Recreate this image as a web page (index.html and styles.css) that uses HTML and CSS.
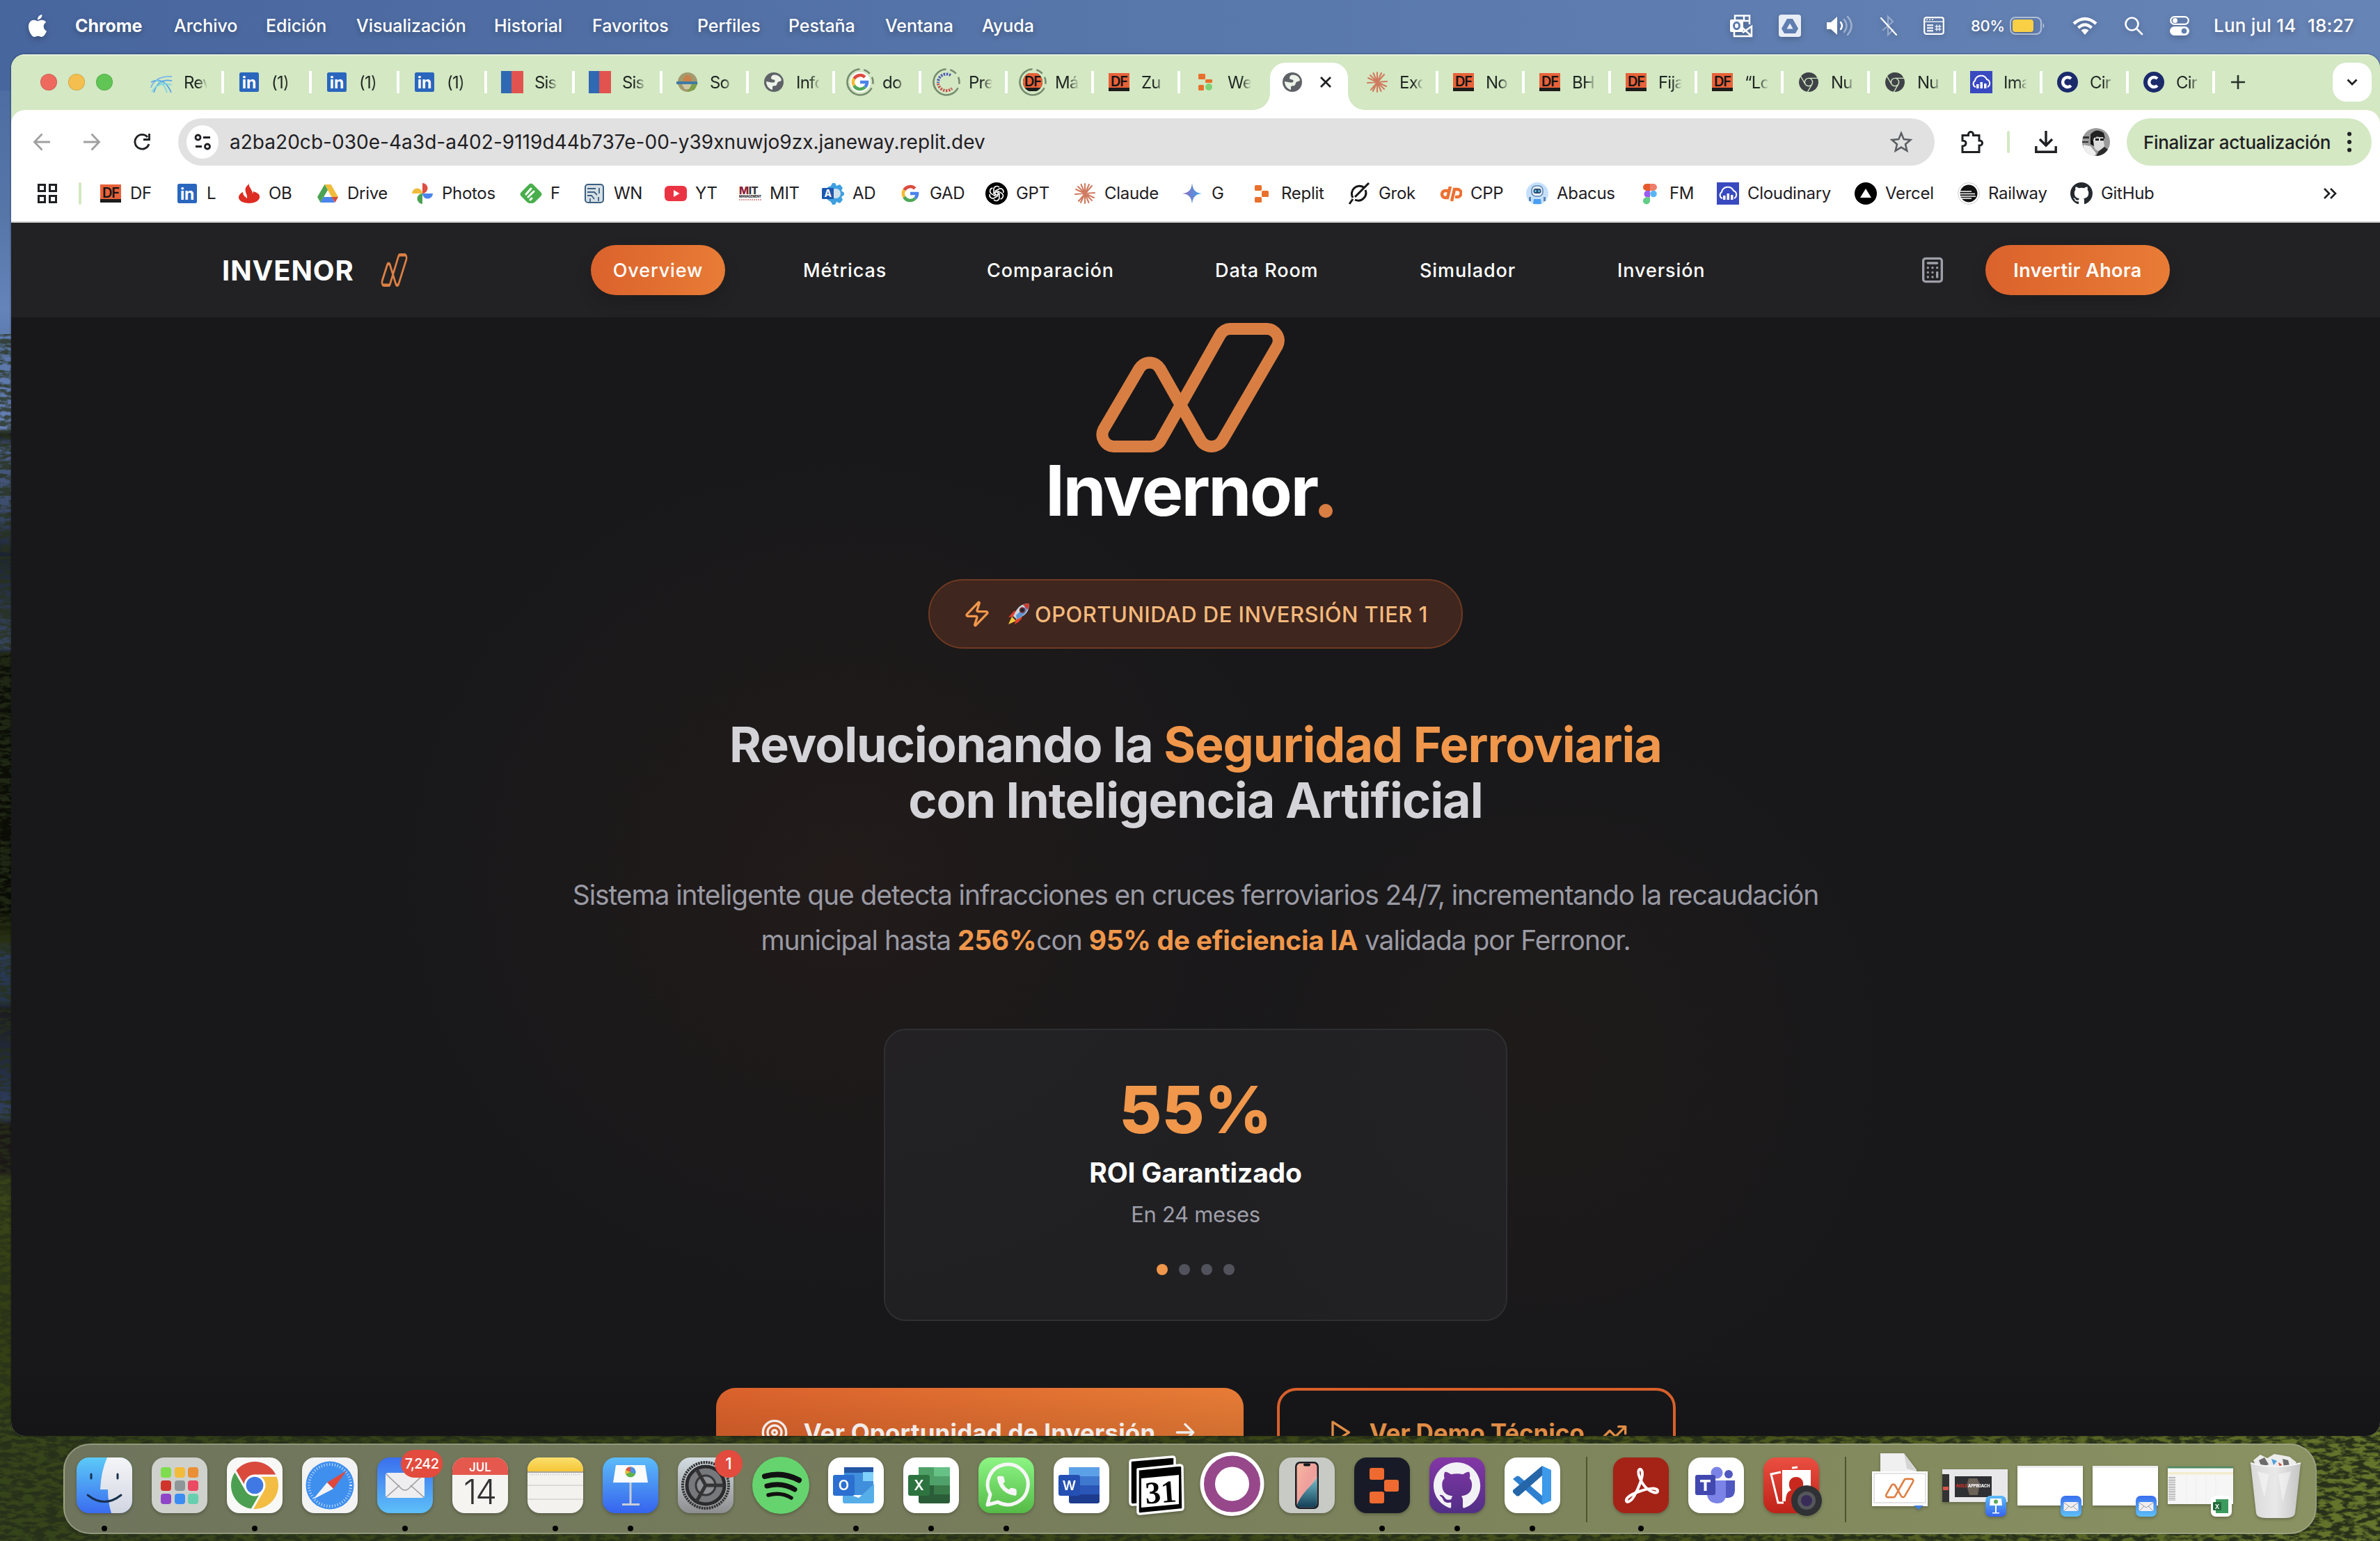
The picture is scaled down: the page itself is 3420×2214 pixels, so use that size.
FILE: index.html
```html
<!DOCTYPE html>
<html lang="es">
<head>
<meta charset="utf-8">
<title>Invernor</title>
<link rel="stylesheet" href="styles.css">
</head>
<body>
<svg class="defs" width="0" height="0">
  <defs>
    <linearGradient id="g-finder" x1="0" y1="0" x2="0" y2="1"><stop offset="0" stop-color="#5ccaf8"/><stop offset="1" stop-color="#3a6cf0"/></linearGradient>
    <linearGradient id="g-silver" x1="0" y1="0" x2="0" y2="1"><stop offset="0" stop-color="#f4f5f8"/><stop offset="1" stop-color="#d2d6e2"/></linearGradient>
    <linearGradient id="g-gray" x1="0" y1="0" x2="0" y2="1"><stop offset="0" stop-color="#d3dde2"/><stop offset="1" stop-color="#8e8e90"/></linearGradient>
    <linearGradient id="g-mail" x1="0" y1="0" x2="0" y2="1"><stop offset="0" stop-color="#3a6fee"/><stop offset="1" stop-color="#5ec0f9"/></linearGradient>
    <linearGradient id="g-key" x1="0" y1="0" x2="0" y2="1"><stop offset="0" stop-color="#5cbcf8"/><stop offset="1" stop-color="#3663ee"/></linearGradient>
    <linearGradient id="g-wa" x1="0" y1="0" x2="0" y2="1"><stop offset="0" stop-color="#8cf584"/><stop offset="1" stop-color="#55bb47"/></linearGradient>
    <linearGradient id="g-yel" x1="0" y1="0" x2="0" y2="1"><stop offset="0" stop-color="#fadf6c"/><stop offset="1" stop-color="#f6c637"/></linearGradient>
    <linearGradient id="g-gh" x1="0" y1="0" x2="0" y2="1"><stop offset="0" stop-color="#8436a6"/><stop offset="1" stop-color="#512f86"/></linearGradient>
    <linearGradient id="g-red" x1="0" y1="0" x2="0" y2="1"><stop offset="0" stop-color="#ea4f41"/><stop offset="1" stop-color="#bf2218"/></linearGradient>
    <linearGradient id="g-phone" x1="0" y1="0" x2="1" y2="1"><stop offset="0" stop-color="#f7b8a0"/><stop offset=".5" stop-color="#ef9f9c"/><stop offset="1" stop-color="#e8b9ae"/></linearGradient>
    <linearGradient id="g-sea" x1="0" y1="0" x2="0" y2="1"><stop offset="0" stop-color="#79c3d0"/><stop offset="1" stop-color="#123f57"/></linearGradient>
    <linearGradient id="g-star" x1="0" y1="0" x2="1" y2="0"><stop offset="0" stop-color="#9168c0"/><stop offset="1" stop-color="#3ba6e8"/></linearGradient>
    <linearGradient id="g-trash" x1="0" y1="0" x2="1" y2="0"><stop offset="0" stop-color="#d9d9d9"/><stop offset=".5" stop-color="#e9e9e9"/><stop offset="1" stop-color="#c4c4c4"/></linearGradient>
    <linearGradient id="g-sky" x1="0" y1="0" x2="1" y2="0"><stop offset="0" stop-color="#48669e"/><stop offset=".5" stop-color="#5877ab"/><stop offset="1" stop-color="#6784b6"/></linearGradient>
    <linearGradient id="g-side" x1="0" y1="0" x2="0" y2="2214" gradientUnits="userSpaceOnUse">
      <stop offset="0" stop-color="#48669e"/><stop offset=".14" stop-color="#5676a8"/><stop offset=".2" stop-color="#6484ba"/><stop offset=".23" stop-color="#5a76a8"/><stop offset=".278" stop-color="#667fb4"/><stop offset=".282" stop-color="#15171d"/><stop offset=".29" stop-color="#4a5d86"/><stop offset=".33" stop-color="#3c4c6c"/><stop offset=".36" stop-color="#1b2330"/><stop offset=".42" stop-color="#3a4866"/><stop offset=".425" stop-color="#0d0f08"/><stop offset=".59" stop-color="#090b04"/><stop offset=".61" stop-color="#28300f"/><stop offset=".62" stop-color="#2b3b58"/><stop offset=".65" stop-color="#26344e"/><stop offset=".655" stop-color="#1b1c1f"/><stop offset=".7" stop-color="#26314a"/><stop offset=".725" stop-color="#33436a"/><stop offset=".73" stop-color="#1b1717"/><stop offset=".76" stop-color="#1b1717"/><stop offset=".765" stop-color="#3a4519"/><stop offset=".86" stop-color="#333f14"/><stop offset="1" stop-color="#3a4818"/>
    </linearGradient>
    <linearGradient id="g-grass" x1="0" y1="0" x2="1" y2="0"><stop offset="0" stop-color="#36441a"/><stop offset=".5" stop-color="#3a4517"/><stop offset=".75" stop-color="#4b561d"/><stop offset="1" stop-color="#66752c"/></linearGradient>
    <filter id="f-grass" x="0" y="0" width="100%" height="100%"><feTurbulence type="fractalNoise" baseFrequency="0.06 0.16" numOctaves="5" seed="8"/><feColorMatrix values="0 0 0 0 0.02  0 0 0 0 0.03  0 0 0 0 0.01  4.5 0 0 0 -1.75"/></filter>
    <path id="mark" d="M29.500 181.400H83A17 17 0 0 0 97.900 172.700L183.400 21.100A17 17 0 0 1 198.300 12.400H251A17 17 0 0 1 265.500 36.800L186.800 172.200A18.300 18.300 0 0 1 155 172.200L97 69.600A17.500 17.500 0 0 0 67 69.600L15.700 157A17 17 0 0 0 29.500 181.400Z"/>
    <path id="octo" d="M8 0C3.58 0 0 3.58 0 8c0 3.54 2.29 6.53 5.47 7.59.4.07.55-.17.55-.38 0-.19-.01-.82-.01-1.49-2.01.37-2.53-.49-2.69-.94-.09-.23-.48-.94-.82-1.13-.28-.15-.68-.52-.01-.53.63-.01 1.08.58 1.23.82.72 1.21 1.87.87 2.33.66.07-.52.28-.87.51-1.07-1.78-.2-3.64-.89-3.64-3.95 0-.87.31-1.59.82-2.15-.08-.2-.36-1.02.08-2.12 0 0 .67-.21 2.2.82.64-.18 1.32-.27 2-.27s1.36.09 2 .27c1.53-1.04 2.2-.82 2.2-.82.44 1.1.16 1.92.08 2.12.51.56.82 1.27.82 2.15 0 3.07-1.87 3.75-3.65 3.95.29.25.54.73.54 1.48 0 1.07-.01 1.93-.01 2.2 0 .21.15.46.55.38A8.01 8.01 0 0 0 16 8c0-4.42-3.58-8-8-8z"/>
    <g id="chrome-wheel">
      <path class="c-red" d="M12 0C8.21 0 4.831 1.757 2.632 4.501l3.953 6.848A5.454 5.454 0 0 1 12 6.545h10.691A12 12 0 0 0 12 0z"/>
      <path class="c-green" d="M1.931 5.47A11.943 11.943 0 0 0 0 12c0 6.012 4.42 10.991 10.189 11.864l3.953-6.847a5.45 5.45 0 0 1-6.865-2.29z"/>
      <path class="c-yellow" d="M15.273 7.636a5.446 5.446 0 0 1 1.45 7.09l.002.001h-.002l-5.344 9.257c.206.01.413.016.621.016 6.627 0 12-5.373 12-12 0-1.54-.29-3.011-.818-4.364z"/>
      <circle class="c-blue" cx="12" cy="12" r="4.364"/>
    </g>
  </defs>
  <symbol id="i-li" viewBox="0 0 32 32"><rect x="2" y="2" width="28" height="28" rx="2.5" fill="#2a66bd"/><text x="16" y="25" text-anchor="middle" font-size="23" font-weight="700" fill="#fff">in</text></symbol>
  <symbol id="i-df" viewBox="0 0 32 32"><rect x="1" y="3" width="30" height="26" fill="#1c1c1c"/><rect x="1" y="3" width="30" height="21" fill="#e8623a"/><text x="16" y="21.5" text-anchor="middle" font-size="20" font-weight="600" letter-spacing="-1" fill="#141414">DF</text></symbol>
  <symbol id="i-arc" viewBox="0 0 32 32"><g fill="none" stroke-width="1.8"><path stroke="#7db7e8" d="M1 24C4 14 14 7 31 8"/><path stroke="#5aa7e6" d="M5 31C10 14 20 12 31 14M1 16C14 10 24 16 30 31"/><path stroke="#7fd6e0" d="M2 30C8 20 18 16 31 20M8 13c10 4 14 10 16 18"/></g></symbol>
  <symbol id="i-flag" viewBox="0 0 32 32"><path fill="#2f69b3" d="M0 0h15v32H0z"/><path fill="#e25350" d="M15 0h17v32H15z"/></symbol>
  <symbol id="i-seal" viewBox="0 0 32 32"><circle cx="16" cy="16" r="14" fill="#a39a6e"/><path fill="#7fa04a" d="M18 20l13-3-5 10-10 3z"/><circle cx="16" cy="12" r="6" fill="#c9824a"/><path fill="#3f7ba1" d="M0 15h30v4H0z"/><path fill="#cfc8a8" d="M8 19h14l-4 7h-6z"/></symbol>
  <symbol id="i-globe" viewBox="0 0 32 32"><circle cx="16" cy="16" r="14" fill="#5f6368"/><path fill="#eef3ea" d="M17 5.500c-3 0-5 2-5 4.500 0 2 2 2 4 2.500 2 0 2 3.500 0 4-3 .5-7-1-11-1.500 0 6 4 11 9 12v-4c0-2 3-1.500 5-2 2-1 1-4 3.500-5.500 2-1 4-.5 4.500-2.500-1-4-4-7-10-7.500z"/></symbol>
  <symbol id="i-google" viewBox="0 0 32 32"><g fill="none" stroke-width="4.600"><path stroke="#dc4b3e" d="M22.800 8.800A10 10 0 0 0 7.300 11"/><path stroke="#f3bb33" d="M7.300 11a10 10 0 0 0 0 10"/><path stroke="#4fa757" d="M7.300 21a10 10 0 0 0 15.800 2"/><path stroke="#4a83ec" d="M23.100 23A10 10 0 0 0 26 16h-10"/></g></symbol>
  <symbol id="i-googlering" viewBox="-4 -4 40 40"><circle cx="16" cy="16" r="14.500" fill="#fff"/><use href="#i-google" width="32" height="32"/><circle cx="16" cy="16" r="18.500" fill="none" stroke="#768c6f" stroke-width="2.600" stroke-dasharray="54 6 10 6 10 6"  transform="rotate(100 16 16)"/></symbol>
  <symbol id="i-cring" viewBox="-4 -4 40 40"><path fill="none" stroke="#4a55b8" stroke-width="4" stroke-dasharray="2.400 1.600" d="M22 6A12 12 0 0 0 4 17"/><path fill="none" stroke="#c6504e" stroke-width="4" stroke-dasharray="2.400 1.600" d="M4 18A12 12 0 0 0 24 25"/><circle cx="16" cy="16" r="18.500" fill="none" stroke="#768c6f" stroke-width="2.600" stroke-dasharray="54 6 10 6 10 6" transform="rotate(100 16 16)"/></symbol>
  <symbol id="i-dfring" viewBox="-4 -4 40 40"><clipPath id="cp-df"><circle cx="16" cy="16" r="14"/></clipPath><g clip-path="url(#cp-df)"><use href="#i-df" width="32" height="32"/></g><circle cx="16" cy="16" r="18.500" fill="none" stroke="#768c6f" stroke-width="2.600" stroke-dasharray="54 6 10 6 10 6" transform="rotate(100 16 16)"/></symbol>
  <symbol id="i-replit" viewBox="0 0 32 32"><g fill="#e9702c"><rect x="6" y="4" width="10" height="8" rx="1.500"/><rect x="16" y="12" width="10" height="9" rx="1.500"/><rect x="6" y="21" width="10" height="8" rx="1.500"/></g></symbol>
  <symbol id="i-replitdot" viewBox="0 0 32 32"><g fill="#e9702c"><rect x="6" y="4" width="10" height="8" rx="1.500"/><rect x="16" y="12" width="10" height="5" rx="1.500"/><rect x="6" y="20" width="8" height="8" rx="1.500"/></g><circle cx="21" cy="23" r="5" fill="#7fd277"/></symbol>
  <symbol id="i-claude" viewBox="0 0 32 32"><g stroke="#d07b5f" stroke-width="2.100" stroke-linecap="round"><path d="M16 2v28M2 17l28-2M6 6l20 20M26 5L7 27M10.500 3l11 26M22 3L10 29M3 10l26 12"/></g></symbol>
  <symbol id="i-chromegray" viewBox="0 0 32 32"><g transform="translate(2 2) scale(1.1667)" fill="#3f4347"><path d="M12 0C8.21 0 4.831 1.757 2.632 4.501l3.953 6.848A5.454 5.454 0 0 1 12 6.545h10.691A12 12 0 0 0 12 0z"/><path d="M1.931 5.47A11.943 11.943 0 0 0 0 12c0 6.012 4.42 10.991 10.189 11.864l3.953-6.847a5.45 5.45 0 0 1-6.865-2.29z"/><path d="M15.273 7.636a5.446 5.446 0 0 1 1.45 7.09l-5.344 9.257c.206.01.413.016.621.016 6.627 0 12-5.373 12-12 0-1.54-.29-3.011-.818-4.364z"/><circle cx="12" cy="12" r="4.200"/></g></symbol>
  <symbol id="i-cloudinary" viewBox="0 0 32 32"><path fill="#3949c0" d="M0 0h32v32H0z"/><path fill="none" stroke="#fff" stroke-width="2" d="M8 23a5 5 0 0 1-1-9 9 9 0 0 1 17-2 6 6 0 0 1 1 11"/><g fill="#fff"><rect x="9" y="19" width="3.500" height="6"/><rect x="14.500" y="16" width="3.500" height="9"/><rect x="20" y="18" width="3.500" height="7"/></g></symbol>
  <symbol id="i-cblue" viewBox="0 0 32 32"><circle cx="16" cy="16" r="15" fill="#1b2a6b"/><path fill="none" stroke="#fff" stroke-width="4.500" d="M21 11a7 7 0 1 0 0 10"/></symbol>
  <symbol id="i-flame" viewBox="0 0 32 32"><path fill="#dd2c22" d="M16 1c-2 5 5 9 5 16l1-4c6 2 10 4 9 9-1 5-8 8-15 8S1 27 1 22c0-4 3-7 6-8 0 5 4 7 6 9 1-6-4-9-2-15 1-3 4-4 5-7z"/></symbol>
  <symbol id="i-drive" viewBox="0 0 32 32"><path fill="#f1bc3b" d="M11.500 3h9L31 21h-9.500z"/><path fill="#4ba253" d="M11.500 3L16 11 5.500 29 1 21z"/><path fill="#4a84ed" d="M10 21h12l4 8H5.500z"/><path fill="#d84a3c" d="M21.500 21H31l-4.500 8z"/></symbol>
  <symbol id="i-photos" viewBox="0 0 32 32"><path fill="#dc4f42" d="M16 1a7.500 7.500 0 0 1 0 15z"/><path fill="#4a84ed" d="M31 16a7.500 7.500 0 0 1-15 0z"/><path fill="#4ba253" d="M16 31a7.500 7.500 0 0 1 0-15z"/><path fill="#f1bc3b" d="M1 16a7.500 7.500 0 0 1 15 0z"/></symbol>
  <symbol id="i-feedly" viewBox="0 0 32 32"><path fill="#48ae4b" d="M13 3q3-3 6 0l11 11q3 3 0 6l-8 8q-2 2-4 2h-4q-2 0-4-2l-8-8q-3-3 0-6z"/><path stroke="#fff" stroke-width="3" stroke-linecap="round" d="M9 17l7-8M12 21l8-8M15 25l2-2"/></symbol>
  <symbol id="i-wn" viewBox="0 0 32 32"><rect x="3" y="3" width="26" height="26" rx="4" fill="#d6e0e6" stroke="#3d5f80" stroke-width="2"/><g fill="none" stroke="#3d5f80" stroke-width="1.800"><path d="M6 9h12M6 14h10l4 4M6 19h6l4 5M23 8v8M10 28v-5M22 21v6"/></g></symbol>
  <symbol id="i-yt" viewBox="0 0 32 32"><rect x="0" y="5" width="32" height="22" rx="6" fill="#eb3443"/><path fill="#fff" d="M13 11v10l8.500-5z"/></symbol>
  <symbol id="i-mit" viewBox="0 0 32 32"><text x="0" y="17" font-size="15" font-weight="800" letter-spacing="-.5" fill="#8d2236">M<tspan fill="#333">IT</tspan></text><text x="0" y="22" font-size="4.600" font-weight="800" fill="#333">MANAGEMENT</text><path stroke="#cc7a7a" stroke-width="1.500" stroke-dasharray="2 1" d="M0 25h32"/></symbol>
  <symbol id="i-ad" viewBox="0 0 32 32"><path fill="#3f9fe0" d="M15 1h4l2 4 5-2 4 5-2 4 4 3v3l-4 3 2 4-4 5-5-2-2 4h-4l-2-4-5-3V7l5-2z"/><circle cx="20" cy="16" r="7" fill="#cfe0ec"/><rect x="0" y="8" width="17" height="16" rx="1.500" fill="#1d57b0"/><text x="8.500" y="21" text-anchor="middle" font-size="14" font-weight="700" fill="#fff">A</text></symbol>
  <symbol id="i-gpt" viewBox="0 0 32 32"><circle cx="16" cy="16" r="16" fill="#000"/><g fill="none" stroke="#fff" stroke-width="1.600"><g id="petal"><path d="M16 13.500l-4 2.300v-6a4.500 4.500 0 0 1 8-2.600"/></g><use href="#petal" transform="rotate(60 16 16)"/><use href="#petal" transform="rotate(120 16 16)"/><use href="#petal" transform="rotate(180 16 16)"/><use href="#petal" transform="rotate(240 16 16)"/><use href="#petal" transform="rotate(300 16 16)"/></g></symbol>
  <symbol id="i-gemini" viewBox="0 0 32 32"><path fill="url(#g-star)" d="M16 1c1 10 5 14 14 15-9 1-13 5-14 15-1-10-5-14-14-15 9-1 13-5 14-15z"/></symbol>
  <symbol id="i-grok" viewBox="0 0 32 32"><path fill="none" stroke="#161616" stroke-width="3" d="M23 7.500A11 11 0 0 0 7 22M10 25A11 11 0 0 0 25 11M30 1L10 21M7 24L2 31"/></symbol>
  <symbol id="i-cp" viewBox="0 0 32 32"><g fill="none" stroke="#ec7133" stroke-width="4.500"><path d="M14 12H8a5 5 0 0 0 0 10h3L15 6M17 27l4-17h4a5.500 5.500 0 0 1 0 11h-3"/></g></symbol>
  <symbol id="i-abacus" viewBox="0 0 32 32"><circle cx="16" cy="16" r="16" fill="#c5e0fb"/><rect x="8" y="5" width="16" height="15" rx="6" fill="#e7f1fb" stroke="#5b84b5" stroke-width="1.500"/><rect x="10.500" y="9" width="11" height="7" rx="3" fill="#2b4a72"/><path fill="#6fd9e8" d="M12.500 11h2v3h-2zM17.500 11h2v3h-2z"/><path fill="#4a9ff0" d="M11 24h10l1 7H10z"/><path fill="#5b84b5" d="M4 21h3v6H4zM25 21h3v6h-3z"/></symbol>
  <symbol id="i-figma" viewBox="0 0 32 32"><path fill="#e55b2d" d="M16 2h-5a5 5 0 0 0 0 10h5z"/><path fill="#ee7d6c" d="M16 2h5a5 5 0 0 1 0 10h-5z"/><path fill="#9b5cf3" d="M16 12h-5a5 5 0 0 0 0 9.500h5z"/><circle cx="21" cy="16.500" r="4.800" fill="#58b6f5"/><path fill="#61cd86" d="M16 21.500h-5a5 5 0 1 0 5 5z"/></symbol>
  <symbol id="i-vercel" viewBox="0 0 32 32"><circle cx="16" cy="16" r="16" fill="#000"/><path fill="#fff" d="M16 9l8 13H8z"/></symbol>
  <symbol id="i-railway" viewBox="0 0 32 32"><circle cx="16" cy="16" r="15.500" fill="#fff" stroke="#ccc"/><circle cx="16" cy="16" r="12.500" fill="#111"/><path stroke="#fff" stroke-width="1.600" d="M3 13h17M3 16.500h22M4 20h22M5 23h15"/></symbol>
  <symbol id="i-github" viewBox="0 0 32 32"><use href="#octo" fill="#24292f" transform="scale(2)"/></symbol>
</svg>

<svg class="wallpaper" viewBox="0 0 3420 2214" preserveAspectRatio="none">
  <rect width="3420" height="2214" fill="url(#g-side)"/>
  <rect width="3420" height="130" fill="url(#g-sky)"/>
  <rect y="2030" width="3420" height="184" fill="url(#g-grass)"/>
  <rect y="480" width="40" height="1550" filter="url(#f-grass)" opacity=".75"/>
  <rect y="2030" width="3420" height="184" filter="url(#f-grass)"/>
</svg>

<header class="menubar">
  <nav class="menus">
    <svg class="apple" viewBox="0 0 24 24"><path d="M12.152 6.896c-.948 0-2.415-1.078-3.96-1.04-2.04.027-3.910 1.183-4.961 3.014-2.117 3.675-.546 9.103 1.519 12.090 1.013 1.454 2.208 3.090 3.792 3.039 1.520-.065 2.090-.987 3.935-.987 1.831 0 2.350.987 3.960.948 1.637-.026 2.676-1.480 3.676-2.948 1.156-1.688 1.636-3.325 1.662-3.415-.039-.013-3.182-1.221-3.220-4.857-.026-3.040 2.480-4.494 2.597-4.559-1.429-2.090-3.623-2.324-4.390-2.376-2-.156-3.675 1.090-4.610 1.090zM15.530 3.830c.843-1.012 1.400-2.427 1.245-3.830-1.207.052-2.662.805-3.532 1.818-.780.896-1.454 2.338-1.273 3.714 1.338.104 2.715-.688 3.559-1.701"/></svg>
    <span class="app">Chrome</span><span>Archivo</span><span>Edición</span><span>Visualización</span><span>Historial</span><span>Favoritos</span><span>Perfiles</span><span>Pestaña</span><span>Ventana</span><span>Ayuda</span>
  </nav>
  <div class="status">
    <svg width="32" height="32" viewBox="0 0 32 32"><path fill="none" stroke="#fff" stroke-width="2.500" d="M7 8V1.500h21V14M18 9h10M20 2v6M6 25v6h25V17l-13 9M18 19l13 12"/><rect y="7" width="19" height="18" rx="2" fill="#fff"/><ellipse cx="9.500" cy="16" rx="4" ry="4.800" fill="none" stroke="#5b79ae" stroke-width="3"/></svg>
    <svg width="32" height="32" viewBox="0 0 32 32"><rect width="32" height="32" rx="4" fill="#e8edf5"/><path fill="#5f7db0" d="M12 6h8l8 14-4 7H8l-4-7z"/><path fill="#e8edf5" d="M16 12.500l4.500 8h-9z"/></svg>
    <svg width="40" height="32" viewBox="0 0 40 32"><path fill="#fff" d="M1 11h6l9-8v26l-9-8H1z"/><g fill="none" stroke="#fff" stroke-width="2.500" stroke-linecap="round"><path d="M21 11q4 5 0 10"/><path opacity=".4" d="M26 7q7 9 0 18M31 3q11 13 0 26"/></g></svg>
    <svg width="24" height="32" viewBox="0 0 24 32" fill="none" stroke="#fff" stroke-width="2.200" stroke-linecap="round"><path opacity=".35" d="M4 22L18 10 11 3v26l7-7"/><path d="M1 5l22 24"/></svg>
    <svg width="30" height="26" viewBox="0 0 30 26"><rect x="1.200" y="1.200" width="27.600" height="23.600" rx="3" fill="none" stroke="#fff" stroke-width="2.200"/><path fill="#e8edf5" d="M2 8h26V6.500H2zM5 11h9v2.500H5zM5 15h9v2.500H5zM5 19h9v2.500H5z"/><path fill="#fff" d="M4 3.500h2v1.500H4zM8 3.500h2v1.500H8zM12 3.500h2v1.500h-2z"/><path fill="none" stroke="#e8edf5" stroke-width="1.500" d="M19 11.500v9M23 11.500v9M16.500 14h9M16.500 18h9"/></svg>
    <span class="pct">80%</span>
    <svg width="52" height="26" viewBox="0 0 52 26"><rect x="1" y="1" width="44" height="24" rx="7" fill="none" stroke="#fff" stroke-opacity=".5" stroke-width="2"/><rect x="4" y="4" width="30" height="18" rx="4" fill="#f8cf45"/><path fill="#fff" fill-opacity=".5" d="M47.500 9q4 4 0 8z"/></svg>
    <svg width="36" height="26" viewBox="0 0 36 26" fill="none" stroke="#fff" stroke-width="4.500"><path d="M2 10Q18-4 34 10M8.500 16q9.500-9 19 0"/><path fill="#fff" stroke="none" d="M12.500 19.500q5.500-4 11 0L18 26z"/></svg>
    <svg width="28" height="28" viewBox="0 0 28 28" fill="none" stroke="#fff" stroke-width="2.700" stroke-linecap="round"><circle cx="11.500" cy="11.500" r="9"/><path d="M18.500 18.500L26 26"/></svg>
    <svg width="28" height="28" viewBox="0 0 28 28"><rect x="1.200" y="1.200" width="25.600" height="10.600" rx="5.300" fill="none" stroke="#fff" stroke-width="2.200"/><circle cx="7.500" cy="6.500" r="3.500" fill="#fff"/><rect y="15" width="28" height="13" rx="6.500" fill="#fff"/><circle cx="20.500" cy="21.500" r="3.800" fill="#5f7db0"/></svg>
    <span class="date">Lun jul 14</span><span class="date">18:27</span>
  </div>
</header>

<main class="window">
  <div class="tabstrip">
    <div class="lights"><i class="l-red"></i><i class="l-yellow"></i><i class="l-green"></i></div>
    <div class="tab first"><svg><use href="#i-arc"/></svg><span>Rev</span></div>
    <div class="tab w"><svg><use href="#i-li"/></svg><span>(1)</span></div>
    <div class="tab w"><svg><use href="#i-li"/></svg><span>(1)</span></div>
    <div class="tab w"><svg><use href="#i-li"/></svg><span>(1)</span></div>
    <div class="tab w"><svg><use href="#i-flag"/></svg><span>Sis</span></div>
    <div class="tab w"><svg><use href="#i-flag"/></svg><span>Sis</span></div>
    <div class="tab"><svg><use href="#i-seal"/></svg><span>So</span></div>
    <div class="tab"><svg><use href="#i-globe"/></svg><span>Info</span></div>
    <div class="tab ring"><svg><use href="#i-googlering"/></svg><span>do</span></div>
    <div class="tab ring"><svg><use href="#i-cring"/></svg><span>Pre</span></div>
    <div class="tab ring"><svg><use href="#i-dfring"/></svg><span>Má</span></div>
    <div class="tab"><svg><use href="#i-df"/></svg><span>Zu</span></div>
    <div class="tab last-before"><svg><use href="#i-replitdot"/></svg><span>We</span></div>
    <div class="tab active"><svg><use href="#i-globe"/></svg><svg class="close" viewBox="0 0 16 16"><path d="M1 1l14 14M15 1L1 15"/></svg></div>
    <div class="tab"><svg><use href="#i-claude"/></svg><span>Exc</span></div>
    <div class="tab"><svg><use href="#i-df"/></svg><span>No</span></div>
    <div class="tab"><svg><use href="#i-df"/></svg><span>BH</span></div>
    <div class="tab"><svg><use href="#i-df"/></svg><span>Fija</span></div>
    <div class="tab"><svg><use href="#i-df"/></svg><span>“Lo</span></div>
    <div class="tab"><svg><use href="#i-chromegray"/></svg><span>Nu</span></div>
    <div class="tab"><svg><use href="#i-chromegray"/></svg><span>Nu</span></div>
    <div class="tab"><svg><use href="#i-cloudinary"/></svg><span>Ima</span></div>
    <div class="tab"><svg><use href="#i-cblue"/></svg><span>Cir</span></div>
    <div class="tab"><svg><use href="#i-cblue"/></svg><span>Cir</span></div>
    <svg class="plus" viewBox="0 0 22 22"><path d="M11 1v20M1 11h20"/></svg>
    <div class="chevron"><svg viewBox="0 0 16 10"><path d="M1.500 1.500L8 8l6.500-6.500"/></svg></div>
  </div>

  <div class="toolbar">
    <svg class="nav dim" viewBox="0 0 24 24"><path d="M24 12H2M12.500 .5L1.500 12l11 11.500"/></svg>
    <svg class="nav dim" viewBox="0 0 24 24"><path d="M0 12h22M11.500 .5L22.500 12l-11 11.500"/></svg>
    <svg class="nav" viewBox="0 0 24 24"><path d="M22 15a10.300 10.300 0 1 1-2-10M22.500 0v8.500H14"/></svg>
    <div class="omnibox">
      <span class="site"><svg viewBox="0 0 24 24"><circle cx="5.500" cy="5.500" r="3.500"/><path d="M13 5.500h10M2 18.500h9"/><circle cx="19" cy="18.500" r="3.500"/></svg></span>
      <span class="url">a2ba20cb-030e-4a3d-a402-9119d44b737e-00-y39xnuwjo9zx.janeway.replit.dev</span>
      <svg class="fav" viewBox="0 0 24 24"><path d="M12 2.500l2.800 6.600 7.200.6-5.500 4.700 1.700 7-6.200-3.700-6.200 3.700 1.700-7L2 9.700l7.200-.6z"/></svg>
    </div>
    <svg class="ext" viewBox="0 0 34 34"><path d="M3 7.500h8.500V6a3.500 3.500 0 0 1 7 0v1.500H27V15h1a3.500 3.500 0 0 1 0 7h-1v9.500H3v-8.500q5-.5 5-4.200T3 15z"/></svg>
    <i class="bar"></i>
    <svg class="dl" viewBox="0 0 32 32"><path d="M16 0v20M7 12l9 9 9-9M1.800 22v8.200h28.400V22"/></svg>
    <svg class="avatar" viewBox="0 0 40 40"><clipPath id="cp-av"><circle cx="20" cy="20" r="20"/></clipPath><g clip-path="url(#cp-av)"><path fill="#9a9a9a" d="M0 0h40v40H0z"/><path fill="#333" d="M0 12h10v3H0zM0 19h9v2H0z"/><path fill="#222" d="M12 9Q20-1 31 7l2 8-12-3-5 5-4-1z"/><path fill="#dcdcdc" d="M17 14l13-1 2 13-6 8-7-3-4-8z"/><path fill="#111" d="M19 15h5v3h-5zM26 15h5v3h-5zM12 14l4 4 1 8-5-3z"/><path fill="#eee" d="M2 24l10 2 8 10-2 4H0z"/><path fill="#2b2b2b" d="M24 33l8-6 8 6v7H20z"/></g></svg>
    <div class="update"><span>Finalizar actualización</span><svg viewBox="0 0 8 34"><circle cx="4" cy="5.500" r="3"/><circle cx="4" cy="17" r="3"/><circle cx="4" cy="28.500" r="3"/></svg></div>
  </div>

  <div class="bookmarks">
    <svg class="apps" viewBox="0 0 28 28"><path d="M1.500 1.500h9v9h-9zM17.500 1.500h9v9h-9zM1.500 17.500h9v9h-9zM17.500 17.500h9v9h-9z"/></svg>
    <i class="bar"></i>
    <a><svg><use href="#i-df"/></svg>DF</a>
    <a><svg><use href="#i-li"/></svg>L</a>
    <a><svg><use href="#i-flame"/></svg>OB</a>
    <a><svg><use href="#i-drive"/></svg>Drive</a>
    <a><svg><use href="#i-photos"/></svg>Photos</a>
    <a><svg><use href="#i-feedly"/></svg>F</a>
    <a><svg><use href="#i-wn"/></svg>WN</a>
    <a><svg><use href="#i-yt"/></svg>YT</a>
    <a><svg><use href="#i-mit"/></svg>MIT</a>
    <a><svg><use href="#i-ad"/></svg>AD</a>
    <a><svg><use href="#i-google"/></svg>GAD</a>
    <a><svg><use href="#i-gpt"/></svg>GPT</a>
    <a><svg><use href="#i-claude"/></svg>Claude</a>
    <a><svg><use href="#i-gemini"/></svg>G</a>
    <a><svg><use href="#i-replit"/></svg>Replit</a>
    <a><svg><use href="#i-grok"/></svg>Grok</a>
    <a><svg><use href="#i-cp"/></svg>CPP</a>
    <a><svg><use href="#i-abacus"/></svg>Abacus</a>
    <a><svg><use href="#i-figma"/></svg>FM</a>
    <a><svg><use href="#i-cloudinary"/></svg>Cloudinary</a>
    <a><svg><use href="#i-vercel"/></svg>Vercel</a>
    <a><svg><use href="#i-railway"/></svg>Railway</a>
    <a><svg><use href="#i-github"/></svg>GitHub</a>
    <svg class="more" viewBox="0 0 20 16"><path d="M2 1l7 7-7 7M11 1l7 7-7 7"/></svg>
  </div>

  <div class="page">
    <header class="sitebar">
      <div class="brand">INVENOR<svg viewBox="0 0 280 194" preserveAspectRatio="none"><use href="#mark"/></svg></div>
      <nav class="sitenav"><a class="on">Overview</a><a>Métricas</a><a>Comparación</a><a>Data Room</a><a>Simulador</a><a>Inversión</a></nav>
      <svg class="calc" viewBox="0 0 24 24"><rect width="16" height="20" x="4" y="2" rx="2"/><path d="M8 6h8M16 14v4M16 10h.01M12 10h.01M8 10h.01M12 14h.01M8 14h.01M12 18h.01M8 18h.01"/></svg>
      <a class="invest">Invertir Ahora</a>
    </header>
    <section class="hero">
      <div class="logo">
        <svg viewBox="0 0 280 194"><use href="#mark"/></svg>
        <div class="name">Invernor<i></i></div>
      </div>
      <div class="badge">
        <svg class="icon" viewBox="0 0 24 24"><path d="M4 14a1 1 0 0 1-.78-1.63l9.900-10.200a.5.5 0 0 1 .86.46l-1.920 6.020A1 1 0 0 0 13 10h7a1 1 0 0 1 .78 1.630l-9.900 10.200a.5.5 0 0 1-.86-.46l1.920-6.020A1 1 0 0 0 11 14z"/></svg>
        <svg class="rocket" viewBox="0 0 32 32"><path fill="#f6c93c" d="M6 20l-5 11 11-5z"/><path fill="#e0402f" d="M9 12l7-1-7 9-8 1zM20 23l1-7-9 7-2 8 5-3z"/><path fill="#c9d4df" d="M31 1c-8 0-14 3-18 9l-5 9 5 5 9-5c6-4 9-10 9-18z"/><path fill="#5f93cf" d="M12 18l14-13 3 2c-2 6-4 9-8 12l-8 5z"/><path fill="#c93a31" d="M31 1c-4 0-7 1-9 2l7 7c1-3 2-6 2-9z"/><circle cx="21" cy="10.500" r="3.500" fill="#1d2733" stroke="#8e2f2a" stroke-width="1.500"/></svg>
        <span>OPORTUNIDAD DE INVERSIÓN TIER 1</span>
      </div>
      <h1>Revolucionando la <em>Seguridad Ferroviaria</em><br>con Inteligencia Artificial</h1>
      <p class="lead"><span>Sistema inteligente que detecta infracciones en cruces ferroviarios 24/7, incrementando la recaudación</span><br>municipal hasta <b>256%</b>con <b>95% de eficiencia IA</b> validada por Ferronor.</p>
      <div class="card">
        <div class="figure">55%</div>
        <div class="label">ROI Garantizado</div>
        <div class="sub">En 24 meses</div>
        <div class="dots"><i class="on"></i><i></i><i></i><i></i></div>
      </div>
      <div class="actions">
        <a class="primary"><svg class="icon" viewBox="0 0 24 24"><circle cx="12" cy="12" r="10"/><circle cx="12" cy="12" r="6"/><circle cx="12" cy="12" r="2"/></svg><span>Ver Oportunidad de Inversión</span><svg class="icon" viewBox="0 0 24 24"><path d="M5 12h14M12 5l7 7-7 7"/></svg></a>
        <a class="ghost"><svg class="icon" viewBox="0 0 24 24"><path d="M6 3l14 9-14 9z"/></svg><span>Ver Demo Técnico</span><svg class="icon" viewBox="0 0 24 24"><path d="M22 7l-8.500 8.500-5-5L2 17M16 7h6v6"/></svg></a>
      </div>
    </section>
  </div>
</main>

<footer class="dock">
  <div class="app run"><svg viewBox="0 0 80 80"><clipPath id="cp-f"><rect width="80" height="80" rx="18"/></clipPath><g clip-path="url(#cp-f)"><path fill="url(#g-finder)" d="M0 0h80v80H0z"/><path fill="url(#g-silver)" d="M44 0Q35 20 34 46h11Q45 64 50 80h30V0z"/></g><path fill="none" stroke="#16304e" stroke-width="3" stroke-linecap="round" d="M21 24v6M59 24v6M16 54q24 19 48 0"/></svg></div>
  <div class="app"><svg viewBox="0 0 80 80"><rect width="80" height="80" rx="18" fill="#cfd1cd"/><rect x="13" y="14" width="15" height="15" rx="4" fill="#7fdc4e"/><rect x="33" y="14" width="15" height="15" rx="4" fill="#f3bb3a"/><rect x="52" y="14" width="15" height="15" rx="4" fill="#ea8f35"/><rect x="13" y="33" width="15" height="15" rx="4" fill="#cf352b"/><rect x="33" y="33" width="15" height="15" rx="4" fill="#8f9698"/><rect x="52" y="33" width="15" height="15" rx="4" fill="#ea4a62"/><rect x="13" y="52" width="15" height="15" rx="4" fill="#8e45c7"/><rect x="33" y="52" width="15" height="15" rx="4" fill="#3b8df3"/><rect x="52" y="52" width="15" height="15" rx="4" fill="#67cfb0"/></svg></div>
  <div class="app run"><svg viewBox="0 0 80 80"><rect width="80" height="80" rx="18" fill="#f8f8f6"/><circle cx="40" cy="40" r="20" fill="#fff"/><use href="#chrome-wheel" transform="translate(6 6) scale(2.833)"/></svg></div>
  <div class="app"><svg viewBox="0 0 80 80"><rect width="80" height="80" rx="18" fill="#f3f3f4"/><circle cx="40" cy="40" r="34.500" fill="#3f8fee"/><circle cx="40" cy="40" r="30" fill="none" stroke="#cfe4fb" stroke-width="4" stroke-dasharray="1 2.900"/><path fill="#e0483c" d="M64 19L45 45l-9-9z"/><path fill="#f4f4f4" d="M16 60l20-24 9 9z"/></svg></div>
  <div class="app run"><svg viewBox="0 0 80 80"><rect width="80" height="80" rx="18" fill="url(#g-mail)"/><rect x="12" y="22" width="56" height="36" rx="4" fill="#eeeef0"/><path fill="none" stroke="#9b9ba0" stroke-width="1.600" d="M13 24l22 21q5 4 10 0l22-21M13 57l19-17M67 57L48 40"/></svg><b class="count wide">7,242</b></div>
  <div class="app"><svg viewBox="0 0 80 80"><clipPath id="cp-c"><rect width="80" height="80" rx="18"/></clipPath><g clip-path="url(#cp-c)"><path fill="#f5f4f1" d="M0 0h80v80H0z"/><path fill="#e5584d" d="M0 0h80v25H0z"/></g><text x="40" y="20" text-anchor="middle" font-size="17" font-weight="600" fill="#fff">JUL</text><text x="39" y="67" text-anchor="middle" font-size="49" font-weight="300" letter-spacing="-2" fill="#333">14</text></svg></div>
  <div class="app run"><svg viewBox="0 0 80 80"><g clip-path="url(#cp-c)"><path fill="#f3f2ee" d="M0 0h80v80H0z"/><path fill="url(#g-yel)" d="M0 0h80v20H0z"/><path fill="#a5a49f" d="M0 20h80v2H0z"/></g><path stroke="#d3d2ce" stroke-width="1.600" d="M0 40h80M0 60h80"/><path stroke="#bbb" stroke-width="1.600" stroke-dasharray="1 2" d="M3 24.500h74"/></svg></div>
  <div class="app run"><svg viewBox="0 0 80 80"><rect width="80" height="80" rx="18" fill="url(#g-key)"/><path fill="#fbfbfb" d="M19 11h42l4 25H15z"/><path fill="#c9cdd5" d="M38.500 36h3v31h-3zM28 66h25v3H28z"/><circle cx="40" cy="21" r="7.500" fill="#5fb24c"/><path fill="#e0533f" d="M40 21v-7.500a7.500 7.500 0 0 0-7 5z"/><path fill="#4a90e8" d="M40 21v-7.500a7.500 7.500 0 0 1 7 10z"/><path fill="#f0b93a" d="M40 21l-7 3a7.500 7.500 0 0 1 0-6z"/></svg></div>
  <div class="app"><svg viewBox="0 0 80 80"><rect width="80" height="80" rx="18" fill="url(#g-gray)"/><circle cx="40" cy="40" r="33" fill="none" stroke="#2f2f31" stroke-width="4" stroke-dasharray="2.500 1.200"/><circle cx="40" cy="40" r="27" fill="#77787b" stroke="#2b2b2d" stroke-width="5"/><circle cx="40" cy="40" r="14" fill="#8e8f92" stroke="#37373a" stroke-width="3"/><path stroke="#343437" stroke-width="5" d="M40 40h26M40 40L27 17M40 40L27 63"/></svg><b class="count">1</b></div>
  <div class="app"><svg viewBox="0 0 80 80"><circle cx="40" cy="40" r="41" fill="#65d46e"/><g fill="none" stroke="#111" stroke-linecap="round"><path stroke-width="8" d="M17 27q26-7 49 5.500"/><path stroke-width="7" d="M20 41q22-6 40 5"/><path stroke-width="5.500" d="M22 54q18-5 33 4"/></g></svg></div>
  <div class="app run"><svg viewBox="0 0 80 80"><rect width="80" height="80" rx="18" fill="#fff"/><rect x="23" y="14" width="42" height="40" rx="3" fill="#3f8fdc"/><path fill="#2356a5" d="M23 14h42v8H23z"/><path fill="#7fd0fb" d="M50 21h15v13H50z"/><path fill="#56aee9" d="M21 50l23 8 22-20v25q0 3-3 3H24q-3 0-3-3z"/><rect x="7" y="25" width="31" height="30" rx="3" fill="#2b6fd0"/><text x="22.500" y="47" text-anchor="middle" font-size="20" font-weight="600" fill="#fff">O</text></svg></div>
  <div class="app run"><svg viewBox="0 0 80 80"><rect width="80" height="80" rx="18" fill="#fff"/><rect x="22" y="14" width="45" height="52" rx="3" fill="#2b5c38"/><path fill="#4ea067" d="M22 14h22v26H22z"/><path fill="#66c187" d="M44 14h23v13H44z"/><path fill="#50a06b" d="M44 27h23v13H44z"/><path fill="#387b48" d="M44 40h23v13H44z"/><rect x="7" y="25" width="31" height="30" rx="3" fill="#2d7340"/><text x="22.500" y="47" text-anchor="middle" font-size="20" font-weight="600" fill="#fff">X</text></svg></div>
  <div class="app run"><svg viewBox="0 0 80 80"><rect width="80" height="80" rx="18" fill="url(#g-wa)"/><path fill="none" stroke="#f6f6f6" stroke-width="5" stroke-linejoin="round" d="M13 68l4-15A29 29 0 1 1 28 64z"/><g transform="translate(24 24) scale(1.400)" fill="#f6f6f6"><path d="M22 16.920v3a2 2 0 0 1-2.180 2 19.790 19.790 0 0 1-8.630-3.070 19.500 19.500 0 0 1-6-6 19.790 19.790 0 0 1-3.070-8.670A2 2 0 0 1 4.110 2h3a2 2 0 0 1 2 1.720 12.840 12.840 0 0 0 .7 2.810 2 2 0 0 1-.45 2.110L8.090 9.910a16 16 0 0 0 6 6l1.270-1.270a2 2 0 0 1 2.110-.45 12.840 12.840 0 0 0 2.810.7A2 2 0 0 1 22 16.920z"/></g></svg></div>
  <div class="app"><svg viewBox="0 0 80 80"><rect width="80" height="80" rx="18" fill="#fff"/><rect x="22" y="14" width="44" height="52" rx="3" fill="#1e3c8f"/><path fill="#5ca1e8" d="M22 14h44v13H22z"/><path fill="#3f78cf" d="M22 27h44v13H22z"/><path fill="#2a56b8" d="M22 40h44v13H22z"/><rect x="7" y="25" width="31" height="30" rx="3" fill="#2450b4"/><text x="22.500" y="47" text-anchor="middle" font-size="19" font-weight="600" fill="#fff">W</text></svg></div>
  <div class="app"><svg viewBox="0 0 80 80"><g stroke="#fff" stroke-width="3.500" stroke-linejoin="round"><path fill="#000" d="M2 7q0-3 3-3l58-5q3 0 3 3v60l-60 6q-4 0-4-4z"/><path fill="#000" d="M13 17l60-6q4 0 4 3l1 58q0 3-3 3l-59 6q-3 0-3-3z"/></g><path fill="#fff" d="M18 30l54-5v42l-54 5z"/><text x="46" y="65" text-anchor="middle" font-size="45" font-weight="700" class="serif" transform="rotate(-4 46 50)">31</text></svg></div>
  <div class="app"><svg viewBox="0 0 80 80"><circle cx="40.500" cy="38" r="46" fill="#fff"/><circle cx="40.500" cy="38" r="32.500" fill="none" stroke="#96488a" stroke-width="16"/></svg></div>
  <div class="app"><svg viewBox="0 0 80 80"><rect width="80" height="80" rx="18" fill="#c8cac5"/><rect x="23" y="6" width="34" height="68" rx="7" fill="#1b1f25"/><rect x="25.500" y="8.500" width="29" height="63" rx="5" fill="url(#g-phone)"/><path fill="url(#g-sea)" d="M26 68q2-8 14-22 12-12 14.500-18v38q0 5.500-5 5.500H31q-5 0-5-3.500z"/><rect x="35" y="8.500" width="10" height="4" rx="2" fill="#14181c"/></svg></div>
  <div class="app run"><svg viewBox="0 0 80 80"><rect width="80" height="80" rx="18" fill="#181b27"/><g fill="#ee6a30"><rect x="22" y="15" width="21" height="17" rx="3"/><rect x="43" y="32" width="21" height="17" rx="3"/><rect x="22" y="49" width="21" height="17" rx="3"/></g></svg></div>
  <div class="app run"><svg viewBox="0 0 80 80"><rect width="80" height="80" rx="18" fill="url(#g-gh)"/><use href="#octo" fill="#f2f1f5" transform="translate(6 7) scale(4.200)"/></svg></div>
  <div class="app run"><svg viewBox="0 0 80 80"><rect width="80" height="80" rx="18" fill="#fff"/><path fill="#2e7fd0" d="M12 31l5-4q2-1 4 0l33 28v13z"/><path fill="#2466a8" d="M12 50l5 5q2 1 4 0l33-29V12L12 47z"/><path fill="#3d99ea" d="M54 12l13 6v44l-13 6z"/></svg></div>
  <i class="sep"></i>
  <div class="app run"><svg viewBox="0 0 80 80"><rect width="80" height="80" rx="18" fill="#a52216"/><path fill="none" stroke="#fff" stroke-width="4" stroke-linejoin="round" d="M38 17c-5 3 2 20 11 28 6 5 15 8 15 3s-14-4-24 0c-9 3-20 8-21 13s7 4 13-9c5-9 10-22 10-29 0-4-2-7-4-6z"/></svg></div>
  <div class="app"><svg viewBox="0 0 80 80"><rect width="80" height="80" rx="18" fill="#fff"/><circle cx="41" cy="22" r="8.500" fill="#7b83e6"/><circle cx="58" cy="24" r="6" fill="#4f57c0"/><path fill="#4f57c0" d="M50 33h17v14q0 10-9 11h-8z"/><path fill="#7b83e6" d="M27 33h27v20q0 13-13 13-13-1-14-13z"/><rect x="10" y="25" width="29" height="29" rx="3" fill="#4148b0"/><path fill="#fff" d="M17 32h15v3.500h-5.500V48h-4V35.500H17z"/></svg></div>
  <div class="app"><svg viewBox="0 0 80 80"><rect width="80" height="80" rx="18" fill="url(#g-red)"/><path fill="none" stroke="#fff" stroke-width="3" d="M29 65h-8L11 24l14-3M41 15l8-1"/><rect x="27" y="18" width="41" height="45" fill="#fff"/><path fill="#c8281d" d="M32 63q0-14 8-16-4-4-3-11 2-8 10-8t10 8q1 7-3 11 8 2 9 16z"/><circle cx="62" cy="62" r="22" fill="#303134"/><circle cx="62" cy="62" r="13" fill="#55565a"/><circle cx="62" cy="62" r="8" fill="#382b57"/></svg></div>
  <i class="sep"></i>
  <div class="app"><svg viewBox="0 0 80 80"><path fill="#f0f0f0" d="M12-6h34l18 24v10H12z"/><path fill="#d4d4d4" d="M46-6l18 26-14-4z"/><rect x="0" y="20" width="80" height="50" fill="#fff"/><rect x="3" y="23" width="74" height="42" fill="#fff" stroke="#c9c9c9"/><use href="#mark" class="mini" transform="translate(18 29) scale(.155)"/><path fill="#3f7fd8" d="M60 69h14l-7 6z"/></svg></div>
  <div class="app"><svg viewBox="0 0 80 80"><rect x="-7" y="17" width="94" height="47" fill="#e8e8ea"/><path fill="#333" d="M-7 24h10v40H-7z"/><path fill="#d8564a" d="M-6 42h8v5h-8z"/><rect x="11" y="27" width="53" height="30" fill="#2f3033"/><path fill="#6b6258" d="M31 30h12l4 8-3 16H32l-4-14z"/><text x="37" y="43" text-anchor="middle" font-size="5.500" font-weight="800" fill="#fff"><tspan fill="#d6342c">AGILE</tspan> APPROACH</text><rect x="55" y="55" width="30" height="30" rx="7" fill="url(#g-key)"/><path fill="#fff" d="M62 59h16l1 10H61zM69 69h2v11h-2zM65 79h10v1.500H65z"/><circle cx="70" cy="63.500" r="3" fill="#58a95b"/></svg></div>
  <div class="app"><svg viewBox="0 0 80 80"><g id="mailwin"><rect x="-7" y="12" width="94" height="57" fill="#fff"/><path fill="#ededed" d="M-7 12h94v3H-7z"/><rect x="55" y="55" width="30" height="30" rx="7" fill="url(#g-mail)"/><rect x="59.500" y="64" width="21" height="13" rx="1.500" fill="#efeff1"/><path fill="none" stroke="#9b9ba0" d="M60 65l10 7 10-7M60 77l7-7M80 77l-7-7"/></g></svg></div>
  <div class="app"><svg viewBox="0 0 80 80"><use href="#mailwin"/></svg></div>
  <div class="app"><svg viewBox="0 0 80 80"><rect x="-7" y="13" width="94" height="54" fill="#f5f6f5"/><path fill="#4c8a63" d="M-7 13h94v2.500H-7z"/><path fill="#f4ecd0" d="M-7 21h94v3.500H-7z"/><path stroke="#999" stroke-width="10" stroke-dasharray="1 1.500" d="M-1 28v34"/><path stroke="#e4e6e4" stroke-width=".5" d="M20 26v40M34 26v40M48 26v40M62 26v40"/><rect x="55" y="55" width="30" height="30" rx="7" fill="#fff"/><path fill="#3c9a5e" d="M62 60h18v20H62z"/><rect x="58" y="64" width="12" height="12" rx="1" fill="#226b3c"/><text x="64" y="73.500" text-anchor="middle" font-size="9" font-weight="600" fill="#fff">X</text></svg></div>
  <div class="app"><svg viewBox="0 0 80 80"><path fill="#ececec" d="M8 4l10-8 10 5 10-6 12 2 10 2 10 8-6 10H14z"/><path fill="#6b6b6b" d="M16 4l8-4 6 10-10 4zM50 2l8 2 2 8-8 2z"/><path fill="#4fa0dc" d="M34 2l8 3-5 6z"/><path fill="#c9533c" d="M44 7l5 3-3 5z"/><path fill="url(#g-trash)" d="M4 8q36 10 72 0l-8 72q-1 7-14 7H26q-13 0-14-7z"/><path fill="none" stroke="#f4f4f4" stroke-width="2" d="M4 8q36 10 72 0"/><path fill="#fff" fill-opacity=".45" d="M14 20l16 4-6 34zM44 24l18-4-12 44z"/></svg></div>
</footer>
</body>
</html>
```
FILE: styles.css
```css
* { box-sizing: border-box; }
body {
  margin: 0;
  width: 3420px;
  height: 2214px;
  overflow: hidden;
  position: relative;
  font-family: Inter, "Liberation Sans", sans-serif;
  color: #1f2023;
}
svg { display: block; flex: none; overflow: visible; }
svg text { font-family: Inter, "Liberation Sans", sans-serif; }
svg text.serif { font-family: "Liberation Serif", serif; }
i { display: block; flex: none; }
a { color: inherit; text-decoration: none; }
.defs { position: absolute; }
.wallpaper { position: absolute; inset: 0; width: 3420px; height: 2214px; z-index: -1; }
.c-red { fill: #d94a3d; }
.c-green { fill: #4c9f50; }
.c-yellow { fill: #f2bd42; }
.c-blue { fill: #4079e4; }

/* menu bar */
.menubar {
  height: 76px;
  display: flex;
  justify-content: space-between;
  align-items: center;
  padding: 0 0 3px 38px;
  color: #fff;
  font-size: 25px;
  font-weight: 500;
  letter-spacing: -0.05px;
  text-shadow: 0 3px 8px rgba(0, 0, 0, .3);
}
.menus {
  display: grid;
  align-items: center;
  grid-template-columns: 70px 142px 132px 130px 198px 141px 151px 131px 139px 139px 100px;
}
.menus .app { font-weight: 700; }
.apple { width: 32px; height: 32px; fill: #fff; filter: drop-shadow(0 3px 4px rgba(0, 0, 0, .25)); }
.status {
  display: grid;
  align-items: center;
  grid-template-columns: 70px 68px 78px 62px 68px 56px 90px 74px 66px 63px 135px 104px;
}
.status svg { filter: drop-shadow(0 3px 4px rgba(0, 0, 0, .2)); }
.status .pct { font-size: 22px; letter-spacing: -0.4px; }
.status .date { font-size: 26px; letter-spacing: 0.2px; white-space: nowrap; }

/* browser window */
.window {
  margin: 2px 0 0 16px;
  height: 1985px;
  border-radius: 20px;
  overflow: hidden;
  display: flex;
  flex-direction: column;
  box-shadow: 0 0 3px rgba(0, 0, 0, .5);
  background: #d3e8c3;
}
.tabstrip {
  height: 80px;
  flex: none;
  display: flex;
  align-items: center;
  background: #d3e8c3;
  border-top: 2px solid #e6f1dc;
  padding-bottom: 2px;
  font-size: 24px;
  color: #1f2622;
}
.lights { display: flex; gap: 16px; padding-left: 42px; width: 178px; }
.lights i { width: 24px; height: 24px; border-radius: 50%; border: 1px solid rgba(0, 0, 0, .12); }
.l-red { background: #ee6a5f; }
.l-yellow { background: #f5bf4f; }
.l-green { background: #61c555; }
.tab {
  width: 124px;
  height: 32px;
  flex: none;
  display: flex;
  align-items: center;
  gap: 16px;
  padding-left: 20px;
  border-right: 4px solid #fff;
}
.tab.w { width: 126px; }
.tab.first { width: 128px; padding-left: 22px; }
.tab > svg { width: 32px; height: 32px; }
.tab.ring { padding-left: 16px; gap: 12px; }
.tab.ring > svg { width: 40px; height: 40px; }
.tab span {
  width: 33px;
  overflow: hidden;
  white-space: nowrap;
  letter-spacing: -0.8px;
  -webkit-mask-image: linear-gradient(90deg, #000 60%, transparent 105%);
  mask-image: linear-gradient(90deg, #000 60%, transparent 105%);
}
.tab.last-before { border-right-color: transparent; }
.tab.active {
  width: 112px;
  height: 68px;
  margin: 10px 6px 0 5px;
  align-self: stretch;
  padding: 0 0 12px 16px;
  gap: 24px;
  border: 0;
  border-radius: 22px 22px 0 0;
  background: #fff;
  position: relative;
}
.tab.active::before, .tab.active::after {
  content: "";
  position: absolute;
  bottom: 0;
  width: 24px;
  height: 24px;
}
.tab.active::before { left: -24px; background: radial-gradient(circle at 0 0, transparent 23.5px, #fff 24px); }
.tab.active::after { right: -24px; background: radial-gradient(circle at 100% 0, transparent 23.5px, #fff 24px); }
.tab.active .close { width: 16px; height: 16px; stroke: #1f2023; stroke-width: 2.8; }
.plus { width: 22px; height: 22px; margin-left: 22px; stroke: #26302a; stroke-width: 2.6; }
.chevron {
  width: 56px;
  height: 56px;
  margin-left: auto;
  margin-right: 12px;
  border-radius: 20px;
  background: #fff;
  display: grid;
  place-items: center;
}
.chevron svg { width: 16px; height: 10px; fill: none; stroke: #1f2023; stroke-width: 2.8; }

.toolbar {
  height: 92px;
  flex: none;
  display: flex;
  align-items: center;
  background: #fff;
  border-radius: 20px 20px 0 0;
  padding-left: 32px;
}
.nav { width: 24px; height: 24px; margin-right: 48px; fill: none; stroke: #1f2023; stroke-width: 2.8; }
.nav.dim { stroke: #a0a0a0; }
.omnibox {
  width: 2524px;
  height: 68px;
  margin-left: -8px;
  border-radius: 34px;
  background: #e1e1e1;
  display: flex;
  align-items: center;
  padding: 0 32px 0 12px;
}
.site { width: 46px; height: 48px; border-radius: 50%; background: #fff; display: grid; place-items: center; }
.site svg { width: 24px; height: 24px; fill: none; stroke: #1f2023; stroke-width: 2.8; }
.url { margin-left: 16px; font-size: 28px; letter-spacing: 0.03px; flex: 1; white-space: nowrap; }
.fav { width: 32px; height: 32px; fill: none; stroke: #5a5d61; stroke-width: 1.9; }
.ext { width: 34px; height: 34px; margin-left: 37px; fill: none; stroke: #1f2023; stroke-width: 3; }
.bar { width: 4px; height: 32px; border-radius: 2px; background: #d3e8c3; }
.toolbar .bar { margin-left: 33px; }
.dl { width: 32px; height: 32px; margin-left: 36px; fill: none; stroke: #1f2023; stroke-width: 3.4; }
.avatar { width: 40px; height: 40px; margin-left: 36px; }
.update {
  width: 352px;
  height: 68px;
  margin-left: auto;
  margin-right: 12px;
  border-radius: 34px;
  background: #d3e8c3;
  display: flex;
  align-items: center;
  justify-content: space-between;
  padding: 0 28px 0 24px;
  font-size: 26px;
  font-weight: 450;
  letter-spacing: -0.3px;
  white-space: nowrap;
}
.update svg { width: 8px; height: 34px; fill: #1f2023; }

.bookmarks {
  height: 70px;
  flex: none;
  display: grid;
  align-items: center;
  background: #fff;
  border-bottom: 2px solid #cfcfcf;
  padding: 0 0 13px 38px;
  font-size: 24px;
  font-weight: 400;
  letter-spacing: -0.3px;
  grid-template-columns:
    59px 30px 110px 89px 113px 136px 156px 91px 117px 107px 119px 111px 124px
    127px 154px 100px 140px 132px 124px 162px 112px 198px 148px 162px 363px 40px;
}
.bookmarks a { display: flex; align-items: center; gap: 12px; white-space: nowrap; }
.bookmarks a svg { width: 32px; height: 32px; }
.apps { width: 28px; height: 28px; fill: none; stroke: #1f2023; stroke-width: 3; }
.more { width: 20px; height: 16px; fill: none; stroke: #1f2023; stroke-width: 2.6; }

/* site */
.page {
  flex: 1;
  min-height: 0;
  overflow: hidden;
  background:
    linear-gradient(0deg, rgba(12, 12, 16, .25), transparent 110px),
    radial-gradient(ellipse 660px 620px at 1200px 940px, rgba(120, 50, 25, .1), transparent),
    radial-gradient(ellipse 520px 520px at 2200px 1200px, rgba(120, 60, 30, .07), transparent),
    #18181a;
}
.sitebar {
  height: 136px;
  background: #222224;
  display: flex;
  align-items: center;
  padding-left: 303px;
  color: #fff;
}
.brand { width: 530px; display: flex; align-items: center; font-size: 40px; font-weight: 650; letter-spacing: 0.9px; }
.brand svg { width: 39px; height: 50px; margin-left: 38px; fill: none; stroke: #dd8044; }
.brand svg use { stroke-width: 18; }
.sitenav {
  width: 1914px;
  display: grid;
  align-items: center;
  grid-template-columns: 273px 264px 328px 294px 284px 200px;
  font-size: 27px;
  font-weight: 500;
  letter-spacing: .9px;
  white-space: nowrap;
}
.sitenav a { padding-left: 32px; }
.sitenav .on, .invest {
  height: 72px;
  border-radius: 36px;
  background: linear-gradient(90deg, #db622c, #e87c36);
  display: flex;
  align-items: center;
  justify-content: center;
  box-shadow: 0 12px 24px rgba(0, 0, 0, .14);
}
.sitenav .on { width: 193px; padding: 0; }
.calc { width: 40px; height: 40px; margin: 0 56px 0 -6px; fill: none; stroke: #9f9fa9; stroke-width: 2; stroke-linecap: round; }
.invest { width: 265px; font-size: 27px; font-weight: 600; letter-spacing: .4px; }

.hero { display: flex; flex-direction: column; align-items: center; padding-top: 4px; color: #d4d4d8; }
.logo { width: 424px; }
.logo svg { width: 280px; height: 194px; margin-left: 64px; fill: none; stroke: #d97e43; stroke-width: 17; }
.name {
  height: 100px;
  line-height: 100px;
  font-size: 100px;
  font-weight: 750;
  letter-spacing: -2.7px;
  color: #fff;
  display: flex;
  align-items: flex-end;
  margin: 1px 0 0 -4px;
}
.name i { width: 20px; height: 20px; border-radius: 50%; background: #d97e43; margin: 0 0 11px 2px; }
.badge {
  height: 100px;
  width: 768px;
  margin-top: 77px;
  padding-left: 48px;
  border: 2px solid #6f3a22;
  border-radius: 50px;
  background: #3f261e;
  display: flex;
  align-items: center;
  color: #f4b97c;
  font-size: 31px;
  font-weight: 550;
  letter-spacing: 0.45px;
  white-space: nowrap;
}
.icon { width: 40px; height: 40px; fill: none; stroke: currentColor; stroke-width: 2; stroke-linecap: round; stroke-linejoin: round; }
.badge .icon { color: #f0974b; }
.rocket { width: 32px; height: 32px; margin: 0 7px 0 24px; }
h1 {
  margin: 98px 0 0;
  font-size: 70px;
  line-height: 80px;
  font-weight: 680;
  text-align: center;
  white-space: nowrap;
  letter-spacing: -1.02px;
}
h1 em { font-style: normal; color: #f0974b; }
.lead {
  margin: 63px 0 0;
  font-size: 39px;
  line-height: 65px;
  font-weight: 400;
  text-align: center;
  white-space: nowrap;
  color: #9a9aa4;
  letter-spacing: -1.05px;
}
.lead > span { letter-spacing: -1.1px; }
.lead b { font-weight: 650; color: #f0974b; letter-spacing: -0.3px; }
.card {
  width: 896px;
  height: 420px;
  margin-top: 95px;
  padding-top: 66px;
  border: 2px solid #2f2f31;
  border-radius: 32px;
  background: rgba(39, 39, 42, .6);
  display: flex;
  flex-direction: column;
  align-items: center;
}
.figure { font-size: 94px; line-height: 96px; font-weight: 800; color: #f0974b; }
.label { margin-top: 15px; font-size: 39px; line-height: 56px; font-weight: 650; color: #fff; letter-spacing: -0.2px; }
.sub { margin-top: 8px; font-size: 31px; line-height: 48px; color: #9f9fa9; letter-spacing: -0.3px; }
.dots { display: flex; gap: 16px; margin-top: 47px; }
.dots i { width: 16px; height: 16px; border-radius: 50%; background: #52525c; }
.dots .on { background: #f0974b; }
.actions { display: flex; gap: 48px; margin-top: 96px; font-size: 35px; font-weight: 650; }
.actions a { height: 128px; border-radius: 28px; display: flex; align-items: center; justify-content: space-between; white-space: nowrap; }
.primary { width: 758px; padding: 0 64px; letter-spacing: 0.15px; color: #f0ecea; background: linear-gradient(180deg, transparent, rgba(0, 0, 0, .15) 80%), linear-gradient(90deg, #db622c, #e87c36); }
.ghost { width: 573px; padding: 0 64px 0 66px; color: #e08d45; border: 4px solid #d9602b; letter-spacing: -0.1px; }

/* dock */
.dock {
  width: 3238px;
  height: 130px;
  margin: 11px 0 0 91px;
  padding: 18px 0 0 17px;
  display: flex;
  gap: 28px;
  border: 2px solid rgba(170, 175, 150, .6);
  border-radius: 38px;
  background: linear-gradient(90deg, #6f755c, #757b5b 35%, #7f865c 70%, #8a9162);
}
.dock .app { width: 80px; height: 108px; flex: none; position: relative; }
.dock .app > svg { width: 80px; height: 80px; filter: drop-shadow(0 2px 2px rgba(0, 0, 0, .25)); }
.dock .run::after {
  content: "";
  display: block;
  width: 8px;
  height: 8px;
  margin: 18px auto 0;
  border-radius: 50%;
  background: #000;
}
.sep { width: 20px; height: 94px; margin-top: -1px; background: linear-gradient(#4d552f, #4d552f) center / 2px 100% no-repeat; }
.count {
  position: absolute;
  top: -11px;
  right: -13px;
  width: 40px;
  height: 40px;
  border-radius: 20px;
  background: #e24b3d;
  color: #fff;
  font-size: 23px;
  font-weight: 500;
  line-height: 40px;
  text-align: center;
}
.count.wide { width: 60px; right: -14px; font-size: 20px; letter-spacing: -0.8px; }
.mini { fill: none; stroke: #dd8044; stroke-width: 17; }
```
